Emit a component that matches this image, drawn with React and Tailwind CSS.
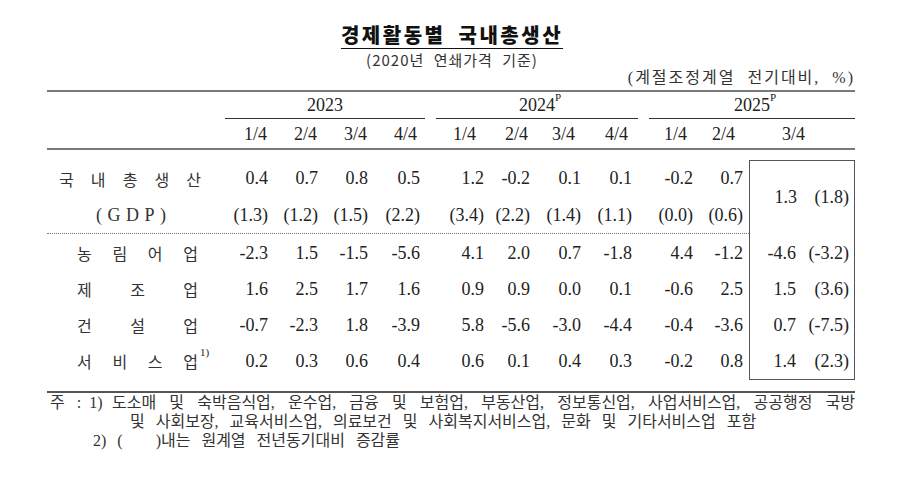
import React from "react";

const SERIF = "font-['Liberation_Serif','Noto_Sans_CJK_KR',serif]";
const KR = "font-['Noto_Sans_CJK_KR',sans-serif]";

const cols = [
  { w: "w-[47px]", d: "pr-[4px]", h: "pr-[5px]" },
  { w: "w-[50px]", d: "pr-[4px]", h: "pr-[5px]" },
  { w: "w-[50px]", d: "pr-[4px]", h: "pr-[5px]" },
  { w: "w-[64px]", d: "pr-[16px]", h: "pr-[19px]" },
  { w: "w-[52px]", d: "pr-[4px]", h: "pr-[12px]" },
  { w: "w-[46px]", d: "pr-[4px]", h: "pr-[6px]" },
  { w: "w-[50px]", d: "pr-[3px]", h: "pr-[9px]" },
  { w: "w-[65px]", d: "pr-[17px]", h: "pr-[21px]" },
  { w: "w-[48px]", d: "pr-[4px]", h: "pr-[10px]" },
  { w: "w-[52px]", d: "pr-[6px]", h: "pr-[14px]" },
];

const quarters = ["1/4", "2/4", "3/4", "4/4", "1/4", "2/4", "3/4", "4/4", "1/4", "2/4"];

const gdp1 = ["0.4", "0.7", "0.8", "0.5", "1.2", "-0.2", "0.1", "0.1", "-0.2", "0.7"];
const gdp2 = ["(1.3)", "(1.2)", "(1.5)", "(2.2)", "(3.4)", "(2.2)", "(1.4)", "(1.1)", "(0.0)", "(0.6)"];

const rows = [
  { label: ["농", "림", "어", "업"], vals: ["-2.3", "1.5", "-1.5", "-5.6", "4.1", "2.0", "0.7", "-1.8", "4.4", "-1.2"], box: ["-4.6", "(-3.2)"] },
  { label: ["제", "조", "업"], vals: ["1.6", "2.5", "1.7", "1.6", "0.9", "0.9", "0.0", "0.1", "-0.6", "2.5"], box: ["1.5", "(3.6)"] },
  { label: ["건", "설", "업"], vals: ["-0.7", "-2.3", "1.8", "-3.9", "5.8", "-5.6", "-3.0", "-4.4", "-0.4", "-3.6"], box: ["0.7", "(-7.5)"] },
  { label: ["서", "비", "스", "업"], vals: ["0.2", "0.3", "0.6", "0.4", "0.6", "0.1", "0.4", "0.3", "-0.2", "0.8"], box: ["1.4", "(2.3)"], sup: true },
];

function Cells({ vals }) {
  return vals.map((v, i) => (
    <div key={i} className={`${cols[i].w} ${cols[i].d} flex-none text-right whitespace-nowrap`}>
      {v}
    </div>
  ));
}

function Label({ chars, sup }) {
  return (
    <div className={`w-[178px] flex-none ${KR} text-[16px] text-[#333]`}>
      <div className="ml-[30px] w-[121px] flex justify-between">
        {chars.map((c, i) => (
          <span key={i} className="relative">
            {c}
            {sup && i === chars.length - 1 ? (
              <span className={`absolute left-full top-[-5px] ml-[2px] text-[11px] ${SERIF} text-[#222]`}>1)</span>
            ) : null}
          </span>
        ))}
      </div>
    </div>
  );
}

export default function App() {
  return (
    <div className="w-[904px] h-[478px] bg-white overflow-hidden text-[#222]">
      {/* Title */}
      <div className="pt-[23px] h-[48px] flex justify-center">
        <span className={`${KR} font-black text-[20px] leading-[24px] tracking-[2.5px] [word-spacing:6px] text-[#111] underline decoration-1 underline-offset-[5px]`}>
          경제활동별 국내총생산
        </span>
      </div>
      <div className={`mt-[3px] h-[18px] leading-[18px] text-center ${KR} text-[15px] tracking-[1px] text-[#333] [word-spacing:5px]`}>
        (2020년 연쇄가격 기준)
      </div>
      <div className={`h-[18px] leading-[18px] text-right pr-[49px] ${SERIF} text-[16px] text-[#333] tracking-[2px] [word-spacing:6px]`}>
        (계절조정계열 전기대비, %)
      </div>

      {/* Table */}
      <div className={`mt-[3px] ml-[47px] w-[808px] ${SERIF} text-[18px]`}>
        <div className="h-[2px] bg-[#7a7a7a]" />
        {/* Year row */}
        <div className="h-[27px] flex">
          <div className="w-[178px] flex-none" />
          <div className="w-[200px] flex-none border-b border-[#333] flex items-center justify-center">2023</div>
          <div className="w-[11px] flex-none" />
          <div className="w-[202px] flex-none border-b border-[#333] flex items-center justify-center">
            <span className="relative">
              2024
              <span className="absolute left-full top-[-3px] text-[11px]">P</span>
            </span>
          </div>
          <div className="w-[11px] flex-none" />
          <div className="w-[206px] flex-none border-b border-[#333] flex items-center justify-center">
            <span className="relative">
              2025
              <span className="absolute left-full top-[-3px] text-[11px]">P</span>
            </span>
          </div>
        </div>
        {/* Quarter row */}
        <div className="h-[29px] pt-[2px] flex items-center">
          <div className="w-[178px] flex-none" />
          {quarters.map((q, i) => (
            <div key={i} className={`${cols[i].w} ${cols[i].h} flex-none text-right`}>
              {q}
            </div>
          ))}
          <div className="w-[106px] flex-none text-right pr-[50px]">3/4</div>
        </div>
        <div className="h-[2px] bg-[#7a7a7a]" />
        <div className="h-[10px]" />

        {/* Body */}
        <div className="flex items-start">
          <div className="w-[702px] flex-none">
            <div className="h-[37px] flex items-center">
              <div className={`w-[178px] flex-none ${KR} text-[16px] text-[#333]`}>
                <div className="ml-[12px] w-[142px] flex justify-between">
                  {["국", "내", "총", "생", "산"].map((c) => (
                    <span key={c}>{c}</span>
                  ))}
                </div>
              </div>
              <Cells vals={gdp1} />
            </div>
            <div className="h-[36px] flex items-center">
              <div className="w-[178px] flex-none text-[#333]">
                <div className="ml-[49px] w-[70px] flex justify-between">
                  {["(", "G", "D", "P", ")"].map((c) => (
                    <span key={c}>{c}</span>
                  ))}
                </div>
              </div>
              <Cells vals={gdp2} />
            </div>
            <div className="border-t border-dotted border-[#777]" />
            <div className="h-[1px]" />
            {rows.map((r, k) => (
              <div key={k} className="h-[36px] flex items-center">
                <Label chars={r.label} sup={r.sup} />
                <Cells vals={r.vals} />
              </div>
            ))}
          </div>
          <div className="w-[106px] flex-none border border-[#555]">
            <div className="h-[72px] flex items-center">
              <span className="w-[47px] text-right">1.3</span>
              <span className="w-[52px] text-right">(1.8)</span>
            </div>
            <div className="h-[2px]" />
            {rows.map((r, k) => (
              <div key={k} className="h-[36px] flex items-center">
                <span className="w-[46px] text-right whitespace-nowrap">{r.box[0]}</span>
                <span className="w-[53px] text-right whitespace-nowrap">{r.box[1]}</span>
              </div>
            ))}
          </div>
        </div>
        <div className="mt-[11px] h-[2px] bg-[#555]" />
      </div>

      {/* Footnotes */}
      <div className={`ml-[47px] ${SERIF} text-[16px] leading-[19px] text-[#333]`}>
        <div className="ml-[3px] flex">
          <div className="w-[62px] flex-none flex">
            <span>주</span>
            <span className="ml-[12px]">:</span>
            <span className="ml-[8px]">1)</span>
          </div>
          <div className="w-[743px] flex-none text-justify [text-align-last:justify]">
            도소매 및 숙박음식업, 운수업, 금융 및 보험업, 부동산업, 정보통신업, 사업서비스업, 공공행정 국방
          </div>
        </div>
        <div className="pl-[83px] [word-spacing:7px]">
          및 사회보장, 교육서비스업, 의료보건 및 사회복지서비스업, 문화 및 기타서비스업 포함
        </div>
        <div className="pl-[46px] [word-spacing:7px]">2) (&nbsp;&nbsp;&nbsp;)내는 원계열 전년동기대비 증감률</div>
      </div>
    </div>
  );
}
